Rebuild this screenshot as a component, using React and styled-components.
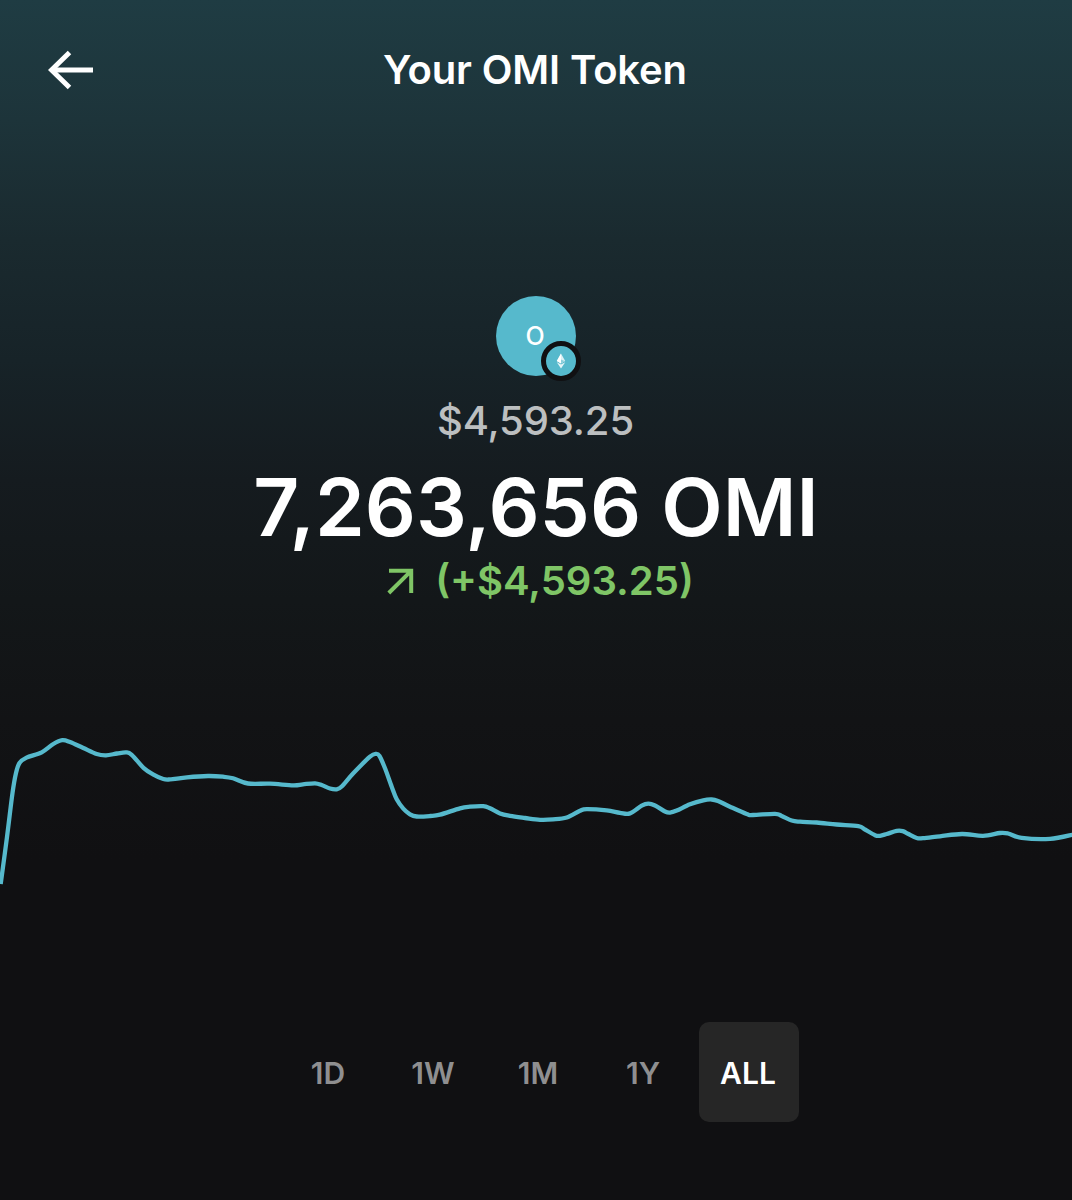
import React from "react";
import styled, { createGlobalStyle } from "styled-components";

const GlobalStyle = createGlobalStyle`
  * {
    box-sizing: border-box;
  }

  body {
    margin: 0;
    background: #101012;
    font-family: Inter, "Liberation Sans", sans-serif;
  }
`;

const ranges = ["1D", "1W", "1M", "1Y", "ALL"];

const points = [
  [0.7, 884], [7, 837], [12.5, 793], [16, 773], [19.5, 763], [26.5, 757.6],
  [41.7, 752.3], [53.3, 744], [62.3, 740.2], [70, 742], [83.3, 748],
  [96.7, 754], [106, 755.3], [117, 753.5], [126, 752.4], [131.7, 754.8],
  [143.5, 767.8], [153, 774.3], [163.3, 779], [170, 779.4], [187, 777.3],
  [208, 776], [223, 776.7], [233, 778.3], [248, 783.5], [270, 783.7],
  [293.3, 785.3], [303, 784.3], [315, 783.3], [321.7, 785], [330, 788.5],
  [336.7, 789.3], [341.7, 786.5], [353.3, 773.3], [370, 756.7],
  [376, 753.8], [379.5, 756], [385, 768.3], [391.7, 786.7],
  [396.7, 799.3], [403.3, 808.6], [410, 814.3], [416.7, 816.5], [430, 816],
  [440, 814.7], [460, 808.3], [470, 806.7], [483.3, 806.2], [490, 808.3],
  [500, 813.5], [510, 815.9], [525, 818], [540, 819.8], [553, 819.4],
  [566.7, 817.5], [580, 810.7], [586.7, 809.2], [606.7, 810.4], [620, 812.8],
  [630, 813.4], [641.7, 805.7], [648.3, 803.7], [655, 805.5], [665, 811.5],
  [670, 812.6], [676.7, 810.6], [690, 804.3], [703.3, 800.3], [711.7, 799.5],
  [718, 801], [730, 806.7], [746.7, 814], [753, 815], [775, 813.8],
  [781.7, 815.9], [791.7, 820.5], [800, 821.7], [816.7, 822.5],
  [836.7, 824.5], [858.3, 826.2], [865, 829.5], [875, 835.2], [880, 835.8],
  [886.7, 834], [896.7, 830.9], [902.7, 831.1], [908, 833.7], [916.7, 838],
  [923, 838.2], [940, 836.3], [962, 834], [983, 835.8], [1000, 833],
  [1008, 833.5], [1021.7, 837.9], [1050, 838.9], [1074, 834.4],
];

const CHART_TOP = 720;

function buildLine(pts) {
  let d = `M${pts[0][0]} ${pts[0][1] - CHART_TOP}`;
  for (let i = 0; i < pts.length - 1; i++) {
    const p0 = pts[i - 1] || pts[i];
    const p1 = pts[i];
    const p2 = pts[i + 1];
    const p3 = pts[i + 2] || p2;
    const c1 = [p1[0] + (p2[0] - p0[0]) / 6, p1[1] + (p2[1] - p0[1]) / 6];
    const c2 = [p2[0] - (p3[0] - p1[0]) / 6, p2[1] - (p3[1] - p1[1]) / 6];
    d += `C${c1[0]} ${c1[1] - CHART_TOP} ${c2[0]} ${c2[1] - CHART_TOP} ${p2[0]} ${p2[1] - CHART_TOP}`;
  }
  return d;
}

function BackIcon() {
  return (
    <svg width="46" height="40" viewBox="0 0 46 40" fill="none" stroke="#fff">
      <path d="M45 20H4" strokeWidth="5" />
      <path d="M21.5 2.5 3.5 20l18 17.5" strokeWidth="5" />
    </svg>
  );
}

function TrendIcon() {
  return (
    <svg width="28" height="28" viewBox="0 0 28 28" fill="none" stroke="#7fc566">
      <path d="M3 3.8h22.2V26M24.6 4.4 2.8 26" strokeWidth="4" />
    </svg>
  );
}

function EthIcon() {
  return (
    <svg width="10" height="16" viewBox="0 0 10 16" fill="#fff">
      <path d="M5 0.5 9.2 8 5 10.4 0.8 8z" opacity="0.8" />
      <path d="M5 0.5V10.4L0.8 8z" />
      <path d="M0.8 9.2 5 11.6 9.2 9.2 5 15.4z" opacity="0.85" />
      <path d="M5 6.4 8.6 8 5 10.2z" fill="#56b9cc" opacity="0.6" />
    </svg>
  );
}

const App = () => {
  const [active, setActive] = React.useState("ALL");

  return (
    <Screen>
      <GlobalStyle />
      <Header>
        <BackButton aria-label="Back">
          <BackIcon />
        </BackButton>
        <Title>Your OMI Token</Title>
      </Header>
      <Summary>
        <TokenLogo>
          O
          <ChainBadge>
            <EthIcon />
          </ChainBadge>
        </TokenLogo>
        <FiatValue>$4,593.25</FiatValue>
        <Amount>7,263,656 OMI</Amount>
        <Change>
          <TrendIcon />
          <span>(+$4,593.25)</span>
        </Change>
      </Summary>
      <Chart viewBox="0 0 1072 180">
        <path d={buildLine(points)} />
      </Chart>
      <Ranges>
        {ranges.map((range) => (
          <RangeButton
            key={range}
            $active={range === active}
            onClick={() => setActive(range)}
          >
            {range}
          </RangeButton>
        ))}
      </Ranges>
    </Screen>
  );
};

export default App;

const Screen = styled.div`
  display: flex;
  flex-direction: column;
  width: 1072px;
  height: 1200px;
  overflow: hidden;
  background: linear-gradient(
    #1f3c43 0px,
    #1d343a 120px,
    #1a2a2f 240px,
    #172328 360px,
    #151b1f 480px,
    #131719 600px,
    #121315 720px,
    #101012 860px
  );
`;

const Header = styled.header`
  display: grid;
  grid-template-columns: 140px 1fr 140px;
  align-items: center;
  height: 140px;
`;

const BackButton = styled.button`
  display: flex;
  margin-left: 48px;
  padding: 0;
  border: 0;
  background: none;
  cursor: pointer;
`;

const Title = styled.h1`
  margin: 0;
  padding-right: 2px;
  text-align: center;
  font-size: 40px;
  line-height: 48px;
  letter-spacing: -0.14px;
  font-weight: 600;
  color: #fff;
`;

const Summary = styled.section`
  display: flex;
  flex-direction: column;
  align-items: center;
  height: 580px;
  padding-top: 156px;
`;

const TokenLogo = styled.div`
  position: relative;
  display: flex;
  align-items: center;
  justify-content: center;
  width: 80px;
  height: 80px;
  padding-right: 2px;
  border-radius: 50%;
  background: #56b9cc;
  color: #fff;
  font-size: 25px;
  font-weight: 500;
`;

const ChainBadge = styled.div`
  position: absolute;
  right: -4.5px;
  bottom: -4.5px;
  display: flex;
  align-items: center;
  justify-content: center;
  width: 40px;
  height: 40px;
  border: 5px solid #101012;
  border-radius: 50%;
  background: #56b9cc;
`;

const FiatValue = styled.div`
  margin-top: 21px;
  padding-right: 1px;
  font-size: 40px;
  line-height: 48px;
  letter-spacing: -0.1px;
  font-weight: 500;
  color: #bcbfc0;
`;

const Amount = styled.div`
  margin-top: 14px;
  font-size: 80px;
  line-height: 96px;
  font-weight: 600;
  color: #fff;
`;

const Change = styled.div`
  display: flex;
  align-items: center;
  gap: 21px;
  margin-top: 2px;
  padding-left: 8px;
  font-size: 40px;
  line-height: 48px;
  font-weight: 600;
  color: #7fc566;
`;

const Chart = styled.svg`
  display: block;
  width: 1072px;
  height: 180px;
  fill: none;
  stroke: #56b9cc;
  stroke-width: 4.3;
`;

const Ranges = styled.div`
  display: flex;
  justify-content: center;
  gap: 5px;
  margin-top: 122px;
  padding-left: 6px;
`;

const RangeButton = styled.button`
  width: 100px;
  height: 100px;
  padding: 2px 2px 0 0;
  border: 0;
  border-radius: 10px;
  background: ${(props) => (props.$active ? "#262626" : "transparent")};
  color: ${(props) => (props.$active ? "#fff" : "#8f8f90")};
  font-family: inherit;
  font-size: 30px;
  font-weight: 600;
  cursor: pointer;
`;
